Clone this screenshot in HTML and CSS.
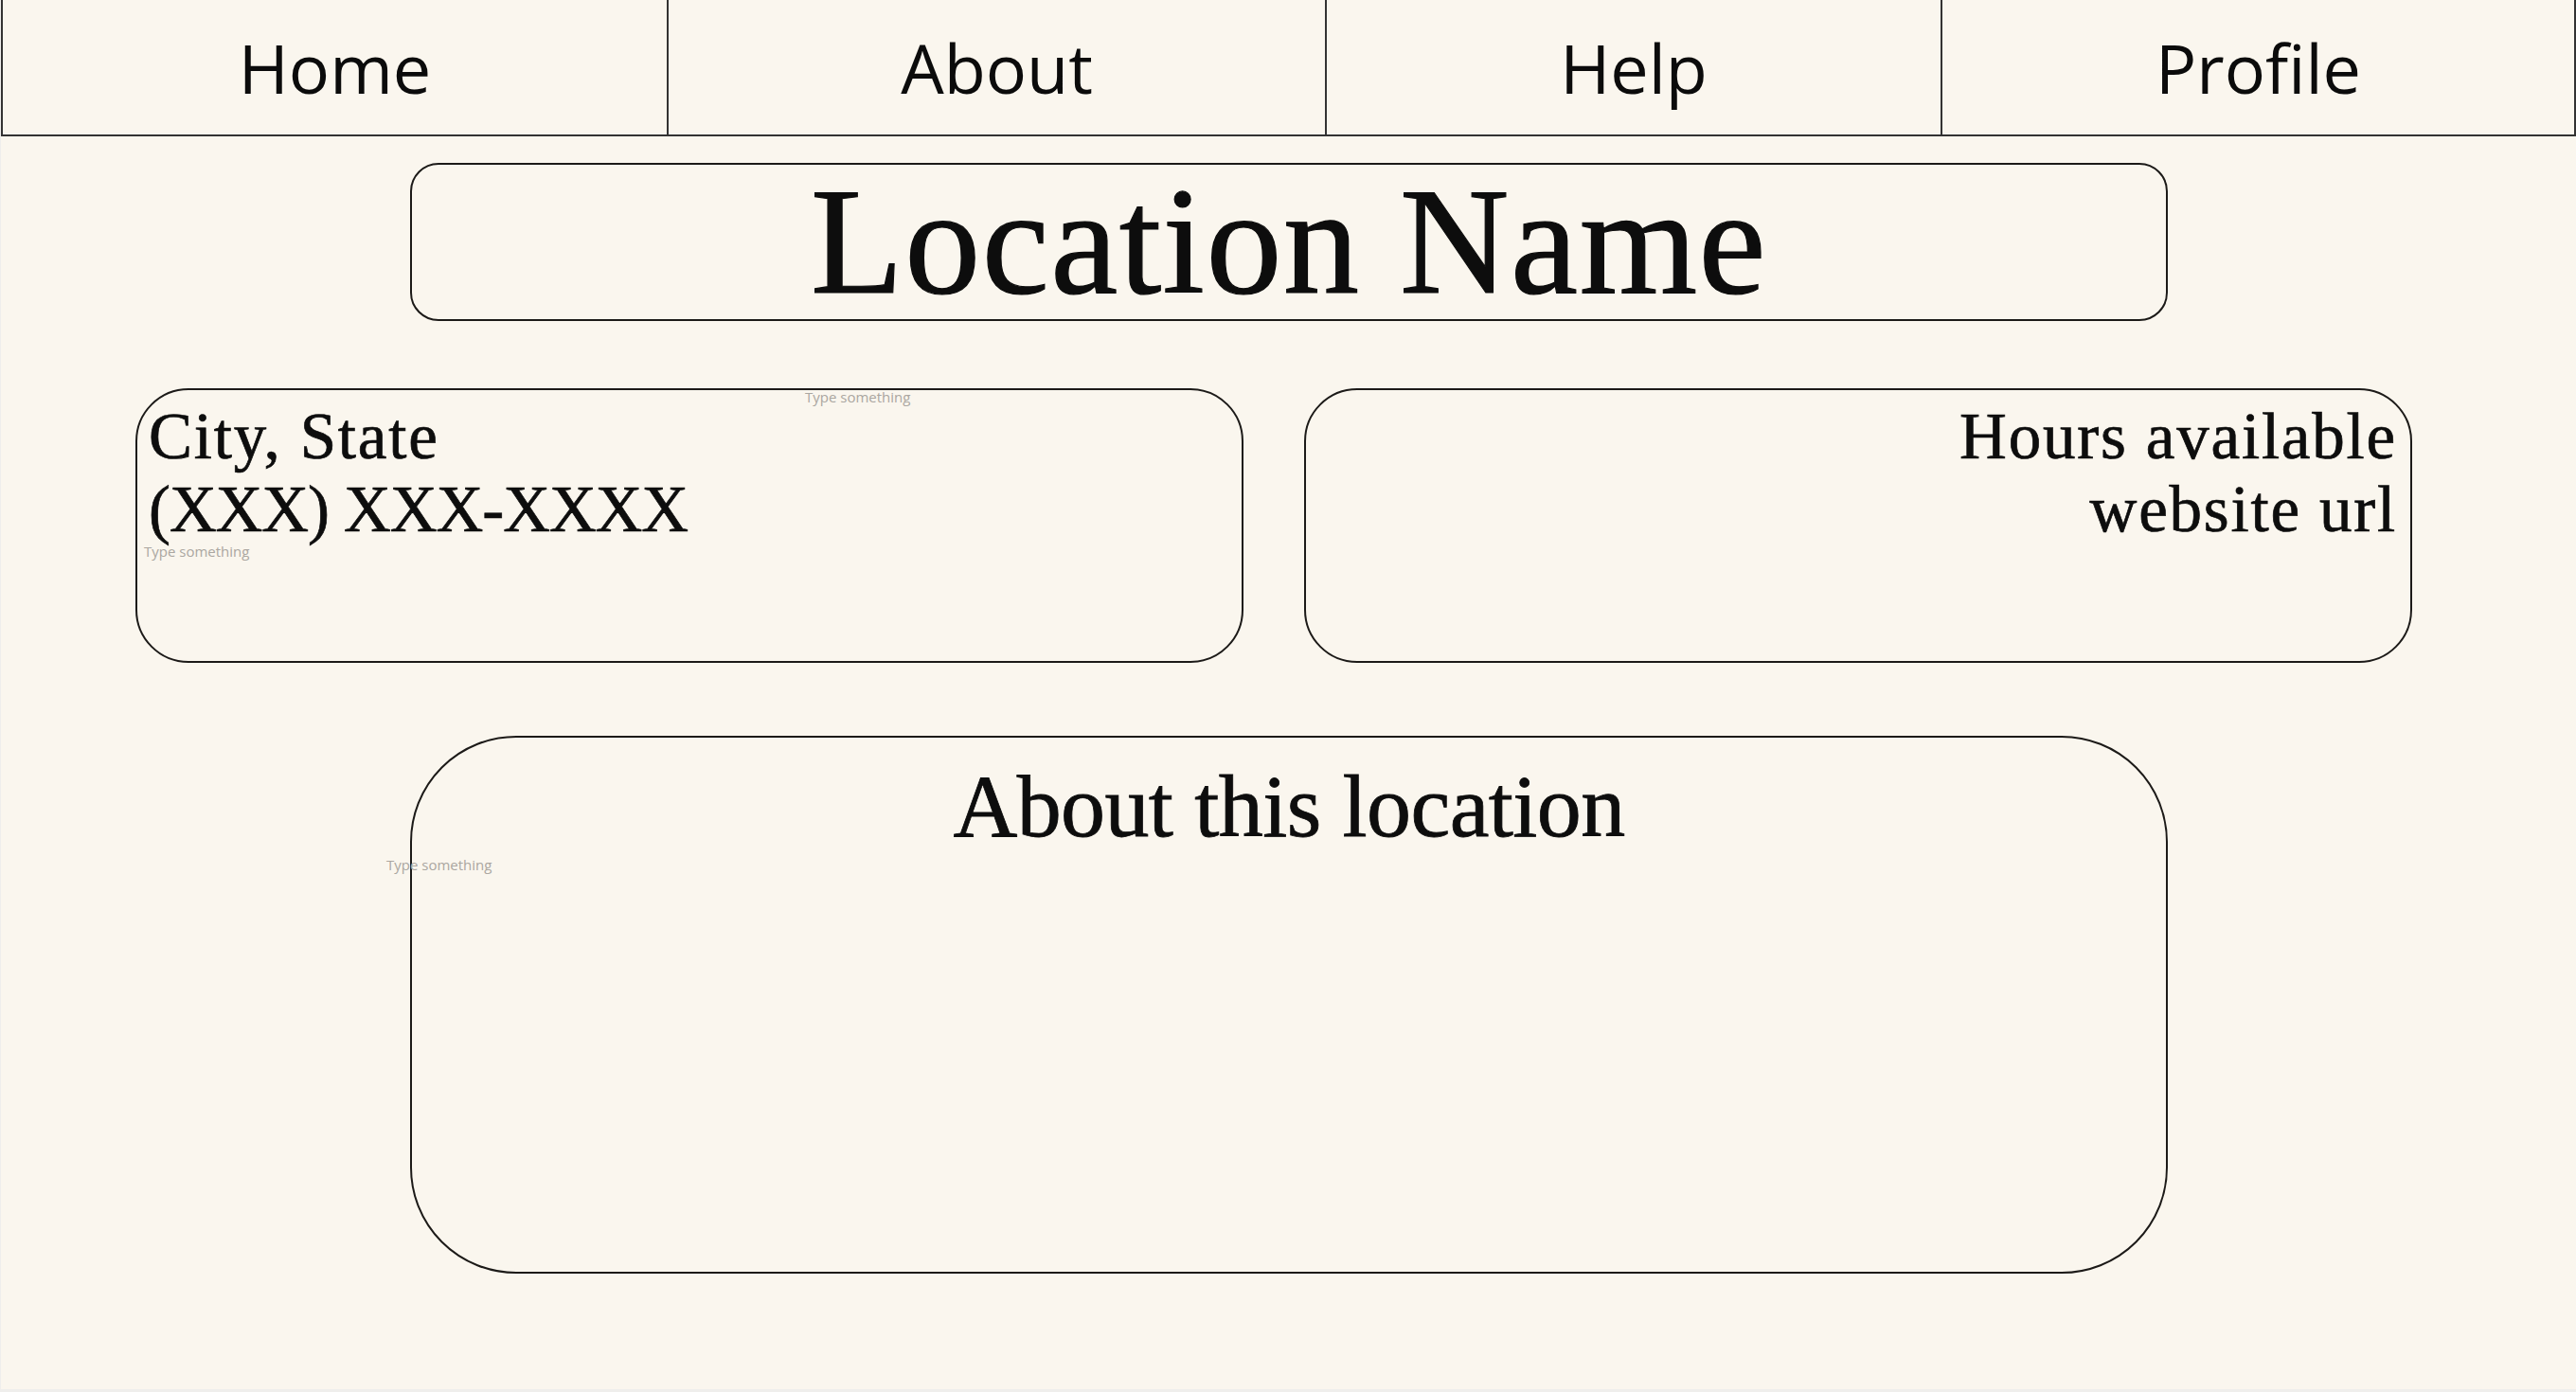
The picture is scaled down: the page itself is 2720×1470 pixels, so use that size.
FILE: index.html
```html
<!DOCTYPE html>
<html lang="en">
<head>
<meta charset="utf-8">
<title>Location</title>
<link rel="stylesheet" href="styles.css">
</head>
<body>
<nav class="nav">
  <div class="nav-item">Home</div>
  <div class="nav-item">About</div>
  <div class="nav-item">Help</div>
  <div class="nav-item">Profile</div>
</nav>
<main class="page">
  <section class="title-box">
    <h1 class="title">Location Name</h1>
  </section>
  <section class="info-row">
    <div class="info-box info-left">
      <p class="info-text"><span class="line-wide">City, State</span><br><span class="line-tight">(XXX) XXX-XXXX</span></p>
    </div>
    <div class="info-box info-right">
      <p class="info-text"><span class="line-wide">Hours available</span><br><span class="line-wide">website url</span></p>
    </div>
  </section>
  <section class="about-box">
    <h2 class="about-title">About this location</h2>
  </section>
  <span class="hint hint-1">Type something</span>
  <span class="hint hint-2">Type something</span>
  <span class="hint hint-3">Type something</span>
</main>
</body>
</html>
```

FILE: styles.css
```css
html {
  background: #efeeec;
}
body {
  margin: 0 0 0 1px;
  min-height: 1467px;
  background: #faf6ee;
  color: #111;
  position: relative;
}
.nav {
  display: grid;
  grid-template-columns: 703px 695px 650px 1fr;
  height: 142px;
  border-left: 2px solid #333;
  border-bottom: 2px solid #333;
}
.nav-item {
  display: flex;
  align-items: center;
  justify-content: center;
  border-right: 2px solid #333;
  font-family: "Open Sans", "Noto Sans", sans-serif;
  font-size: 72px;
  line-height: 142px;
  color: #0b0b0b;
}
.page {
  display: flex;
  flex-direction: column;
}
.title-box {
  margin: 28px 0 0 432px;
  width: 1852px;
  height: 163px;
  border: 2px solid #1c1a18;
  border-radius: 30px;
  display: flex;
  justify-content: center;
}
.title {
  margin: 0;
  font-family: "Liberation Serif", "Times New Roman", serif;
  font-weight: normal;
  font-size: 160px;
  line-height: 163px;
  letter-spacing: 1.5px;
  -webkit-text-stroke: 1.2px #0d0d0d;
  color: #0d0d0d;
}
.info-row {
  display: flex;
  gap: 64px;
  margin: 71px 0 0 142px;
}
.info-box {
  width: 1166px;
  height: 286px;
  border: 2px solid #1c1a18;
  border-radius: 56px;
}
.info-text {
  margin: 0;
  padding: 11px 12px 0 12px;
  font-family: "Liberation Serif", "Times New Roman", serif;
  font-size: 69px;
  line-height: 77px;
  color: #0d0d0d;
  -webkit-text-stroke: 0.7px #0d0d0d;
}
.line-wide {
  letter-spacing: 1.8px;
}
.line-tight {
  letter-spacing: -1.1px;
}
.info-right .info-text {
  text-align: right;
  padding-right: 14px;
}
.about-box {
  margin: 77px 0 0 432px;
  width: 1852px;
  height: 564px;
  border: 2px solid #1c1a18;
  border-radius: 112px;
  display: flex;
  justify-content: center;
  align-items: flex-start;
}
.about-title {
  margin: 17px 0 0 0;
  font-family: "Liberation Serif", "Times New Roman", serif;
  font-weight: normal;
  font-size: 94px;
  line-height: 110px;
  letter-spacing: -0.6px;
  color: #0d0d0d;
  -webkit-text-stroke: 0.8px #0d0d0d;
}
.hint {
  position: absolute;
  font-family: "Open Sans", "Noto Sans", sans-serif;
  font-size: 15px;
  line-height: 20px;
  color: #aba7a1;
  white-space: nowrap;
}
.hint-1 {
  left: 849px;
  top: 409px;
}
.hint-2 {
  left: 151px;
  top: 572px;
}
.hint-3 {
  left: 407px;
  top: 903px;
}
```
